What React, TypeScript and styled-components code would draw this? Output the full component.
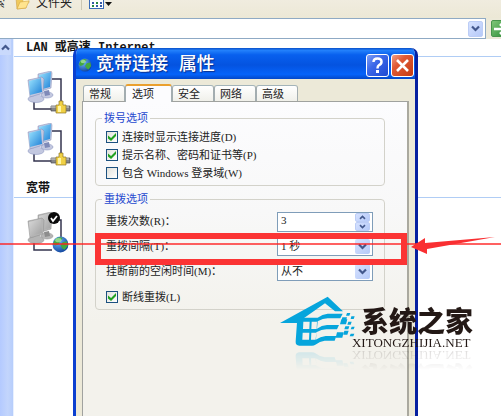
import React, { useState } from "react";
import styled, { createGlobalStyle } from "styled-components";

const uiFont = '"Liberation Serif", "Noto Sans CJK SC", serif';
const monoFont = '"Liberation Mono", "Noto Sans CJK SC", monospace';

const GlobalStyle = createGlobalStyle`
  * { box-sizing: border-box; }
  body { margin: 0; background: #fff; color: #222; font: 11px/13px ${uiFont}; }
  button, input, select { font: inherit; color: inherit; margin: 0; padding: 0; }
`;

const Desktop = styled.div`
  position: relative;
  display: flex;
  flex-direction: column;
  height: 100vh;
  overflow: hidden;
`;

const Toolbar = styled.div`
  display: flex;
  align-items: flex-end;
  flex: none;
  height: 18px;
  padding-bottom: 8px;
  overflow: hidden;
  background: linear-gradient(#f0ecdf, #ece8d6);
`;

const ToolButton = styled.button`
  display: flex;
  align-items: flex-end;
  gap: 4px;
  border: 0;
  background: none;
  white-space: nowrap;
  font-size: 12px;
  line-height: 14px;
`;

const ClippedTool = styled(ToolButton)`
  width: 15px;
  justify-content: flex-end;
  padding-right: 10px;
`;

const Separator = styled.span`
  width: 1px;
  height: 26px;
  margin: 0 7px 0 9px;
  align-self: flex-end;
  background: #cbc7b4;
`;

const AddressBar = styled.form`
  display: flex;
  flex: none;
  height: 21px;
  background: #ece9d8;
`;

const AddressField = styled.div`
  display: flex;
  align-items: center;
  flex: 1;
  min-width: 0;
  padding-right: 2px;
  border: solid #8faac4;
  border-width: 1px 1px 1px 0;
  background: #fff;
`;

const AddressInput = styled.input`
  flex: 1;
  min-width: 0;
  border: 0;
  outline: 0;
  background: none;
`;

const BlueButton = styled.button`
  display: grid;
  place-items: center;
  width: 15px;
  height: 16px;
  border: 1px solid #bccdf6;
  border-radius: 2px;
  background: linear-gradient(135deg, #d6e2ff, #b5c9f8);
`;

const GoButton = styled.button`
  display: grid;
  place-items: center;
  flex: none;
  width: 18px;
  height: 17px;
  margin: 2px -8px 0 5px;
  border: 1px solid #47944b;
  border-radius: 2px;
  background: linear-gradient(135deg, #7fc678, #2b8b34);
`;

const Explorer = styled.main`
  display: flex;
  flex: 1;
  min-height: 0;
`;

const SideStrip = styled.div`
  display: flex;
  flex-direction: column;
  width: 14px;
  border-right: 1px solid #e8f0ff;
  background: linear-gradient(90deg, #b4caff, #c3d5fc 60%, #b6cdfb);
`;

const SideButton = styled.button`
  display: grid;
  place-items: center;
  width: 11px;
  height: 16px;
  border: 0;
  background: #c9d9fc;
`;

const Connections = styled.div`
  flex: 1;
  min-width: 0;
`;

const GroupHeading = styled.h2`
  height: 18px;
  margin: 0;
  padding: 2px 0 0 12px;
  border-bottom: 1px solid #b0cdf5;
  font: bold 12px/15px ${monoFont};
  color: #161616;
`;

const IconList = styled.div<{ $short?: boolean }>`
  display: grid;
  justify-content: start;
  gap: 8px;
  padding: ${(p) => (p.$short ? "14px 0 0 13px" : "14px 0 13px 13px")};
  svg { display: block; }
`;

const Dialog = styled.section`
  position: absolute;
  inset: 48px 83px 0 73px;
  display: flex;
  flex-direction: column;
  border: solid #0b3fd0;
  border-width: 0 3px;
  border-right-color: #0620a0;
  border-radius: 7px 7px 0 0;
  background: #ece9d8;
  overflow: hidden;
`;

const TitleBar = styled.header`
  display: flex;
  align-items: center;
  gap: 2px;
  flex: none;
  height: 31px;
  margin: 0 -3px;
  padding: 3px 4px 0 5px;
  background: linear-gradient(#0a50c8, #2280fb 8%, #0860ee 22%, #0453e0 55%, #0563fa 85%, #0347c8);
`;

const Title = styled.h1`
  flex: 1;
  margin: 0 0 0 2px;
  font: 500 18px/22px ${monoFont};
  color: #fff;
  text-shadow: 1px 1px 1px #0b2f8d;
  white-space: nowrap;
`;

const CaptionButton = styled.button<{ $danger?: boolean }>`
  display: grid;
  place-items: center;
  width: 23px;
  height: 23px;
  border: 1px solid #fff;
  border-radius: 3px;
  background: ${(p) =>
    p.$danger
      ? "linear-gradient(135deg, #f0a088, #e05a35 35%, #c43a12)"
      : "linear-gradient(135deg, #7e9ff5, #3c68e8 40%, #1d49d2)"};
`;

const Tabs = styled.div`
  display: flex;
  align-items: flex-end;
  flex: none;
  height: 22px;
  padding: 0 7px;
`;

const Tab = styled.button<{ $active: boolean }>`
  width: ${(p) => (p.$active ? 47 : 42)}px;
  height: ${(p) => (p.$active ? 18 : 16)}px;
  margin-bottom: ${(p) => (p.$active ? -1 : 0)}px;
  padding-left: ${(p) => (p.$active ? 6 : 5)}px;
  border: 1px solid #a3adb0;
  border-top: ${(p) => (p.$active ? "2px solid #eaa02e" : "1px solid #a3b4b9")};
  border-bottom: 0;
  border-radius: 3px 3px 0 0;
  background: ${(p) => (p.$active ? "#fcfcfe" : "linear-gradient(#fff, #f0f0ea)")};
  position: relative;
  z-index: ${(p) => (p.$active ? 1 : 0)};
  text-align: left;
  line-height: 14px;
  white-space: nowrap;
`;

const Panel = styled.div`
  display: flex;
  flex-direction: column;
  gap: 7px;
  flex: 1;
  margin: 0 6px;
  padding: 10px 22px 0 12px;
  border: 1px solid #a0a29f;
  border-right: 2px solid #aaa99f;
  border-bottom: 0;
  background: linear-gradient(#fcfcfe, #f8f8f8 35%, #f3f2ec 70%);
`;

const Group = styled.fieldset`
  min-width: 0;
  margin: 0;
  padding: 3px 11px 3px 10px;
  border: 1px solid #d3d2ca;
  border-radius: 4px;
`;

const Legend = styled.legend`
  margin-left: -4px;
  padding: 0 2px;
  color: #2548cf;
`;

const CheckRow = styled.label<{ $spaced?: boolean }>`
  display: flex;
  align-items: center;
  gap: 4px;
  height: 18px;
  margin-top: ${(p) => (p.$spaced ? 4 : 0)}px;
  white-space: nowrap;
`;

const CheckBox = styled.input`
  appearance: none;
  display: grid;
  place-items: center;
  width: 12px;
  height: 12px;
  border: 1px solid #1c5180;
  background: linear-gradient(135deg, #e2e2dc, #fff);
  &:checked::before {
    content: "";
    width: 8px;
    height: 8px;
    background: #21a121;
    clip-path: polygon(0 30%, 38% 62%, 100% 0, 100% 38%, 38% 100%, 0 68%);
  }
`;

const FieldRow = styled.div`
  display: grid;
  grid-template-columns: 1fr 96px;
  align-items: center;
  height: 25px;
  white-space: nowrap;
`;

const FieldBox = styled.div<{ $tall?: boolean }>`
  display: grid;
  grid-template-columns: 1fr 16px;
  align-items: center;
  height: ${(p) => (p.$tall ? 20 : 18)}px;
  padding-right: 1px;
  border: 1px solid #7f9db9;
  background: #fff;
`;

const NumberInput = styled.input`
  width: 100%;
  padding: 0 3px 3px;
  border: 0;
  outline: 0;
  background: none;
`;

const Spinner = styled.span`
  display: grid;
`;

const SpinButton = styled(BlueButton)`
  height: 9px;
`;

const Choice = styled.select`
  grid-area: 1 / 1 / 2 / 3;
  width: 100%;
  height: 16px;
  padding: 0 3px;
  border: 0;
  outline: 0;
  appearance: none;
  background: none;
`;

const ChoiceArrow = styled.span`
  grid-area: 1 / 2;
  display: grid;
  place-items: center;
  width: 15px;
  height: 15px;
  border-radius: 2px;
  background: linear-gradient(135deg, #d6e2ff, #b5c9f8);
  pointer-events: none;
`;

const Guide = styled.div`
  position: absolute;
  inset: 243px 0 auto 0;
  height: 2px;
  background: rgba(255, 30, 30, 0.7);
`;

const Callout = styled.div`
  position: absolute;
  inset: 233px 94px auto 95px;
  height: 32px;
  border: 6px solid #fb3434;
`;

const Pointer = styled.svg`
  position: absolute;
  top: 236px;
  right: 5px;
`;

const Watermark = styled.div`
  position: absolute;
  right: 28px;
  top: 296px;
  display: flex;
  -webkit-box-reflect: below 0 linear-gradient(transparent 60%, rgba(0, 0, 0, 0.16));
`;

const MarkText = styled.div`
  margin: 9px 0 0 -4px;
  color: #231815;
  white-space: nowrap;
`;

const MarkName = styled.div`
  padding-left: 9px;
  font: 900 28px/31px "Noto Sans CJK SC", sans-serif;
`;

const MarkSite = styled.div`
  font: 13px/13px "Liberation Serif", serif;
`;

function Chevron({ up = false, small = false }: { up?: boolean; small?: boolean }) {
  return (
    <svg width={small ? 7 : 9} height={small ? 5 : 7} viewBox="0 0 9 7" aria-hidden="true">
      <path d={up ? "M1 5.5 4.5 2 8 5.5" : "M1 1.5 4.5 5 8 1.5"} fill="none" stroke="#43588c" strokeWidth="2.2" />
    </svg>
  );
}

function FolderIcon() {
  return (
    <svg width="17" height="16" viewBox="0 0 17 16" aria-hidden="true">
      <path d="M1 4 5 3l2 2 4-1v10L2 15Z" fill="#f0c95c" stroke="#cfa044" strokeWidth=".6" />
      <path d="M8 1h6v8H8Z" fill="#fdf3c8" stroke="#d2b566" strokeWidth=".5" />
      <path d="m5 8 9-1-3 7-9 1Z" fill="#ffe48e" stroke="#d5a63f" strokeWidth=".6" />
    </svg>
  );
}

function ViewsIcon() {
  return (
    <svg width="23" height="18" viewBox="0 0 23 18" aria-hidden="true">
      <rect x=".5" y=".5" width="14" height="16" fill="#fff" stroke="#3b6cb8" />
      <rect x="1" y="1" width="13" height="3" fill="#2b62c9" />
      <path d="M3 6h2v2H3zM11 6h2v2h-2zM7 10h2v2H7zM3 13h2v2H3z" fill="#268b42" />
      <path d="M7 6h2v2H7zM3 10h2v2H3zM11 10h2v2h-2zM7 13h2v2H7zM11 13h2v2h-2z" fill="#355ba7" />
      <path d="M16 10h7l-3.500 4Z" fill="#111" />
    </svg>
  );
}

function Globe() {
  return (
    <>
      <circle cx="8" cy="8" r="7.500" fill="url(#sea)" />
      <path d="M3 3q4-3 7-1L8 5 6 8 3 9 1 7ZM10 6l4-1 1 4-3 4-2-1-2-3Z" fill="#43a83f" />
      <ellipse cx="6" cy="4" rx="3" ry="2" fill="#c7f4c0" opacity=".6" />
    </>
  );
}

function ConnectionIcon({ dialUp = false }: { dialUp?: boolean }) {
  const id = dialUp ? "gray-screen" : "blue-screen";
  const shell = dialUp ? "#b5b5b5" : "#c3c8e0";
  const edge = dialUp ? "#8d8d8d" : "#7f8ab8";
  return (
    <svg width="44" height="44" viewBox="0 0 44 44" role="img" aria-label={dialUp ? "宽带连接" : "本地连接"}>
      <defs>
        <linearGradient id={id} x1="0" y1="0" x2="1" y2="1">
          <stop offset="0" stopColor={dialUp ? "#d9d9d9" : "#9be4ff"} />
          <stop offset="1" stopColor={dialUp ? "#a0a0a0" : "#1e7fd6"} />
        </linearGradient>
        <radialGradient id="sea" cx=".35" cy=".3" r=".8">
          <stop offset="0" stopColor="#6fb9ff" />
          <stop offset="1" stopColor="#093b96" />
        </radialGradient>
      </defs>
      <path d="M25 8h9v26M7 29v9h18" fill="none" stroke="#34344f" strokeWidth="1.500" />
      <ellipse cx="20" cy="24" rx="6" ry="3" fill={shell} stroke={edge} strokeWidth=".5" />
      <path d="m17 20 5-1 1 5-5 1Z" fill={edge} />
      <path d="m11 3 13-3 1 2-1 15-13 4Z" fill={shell} stroke={edge} strokeWidth=".5" />
      <path d="m12 4 12-3-1 15-11 3Z" fill={`url(#${id})`} />
      <ellipse cx="9" cy="28" rx="8" ry="3.500" fill={shell} stroke={edge} strokeWidth=".5" />
      <path d="m6 22 7-1 1 7-6 2Z" fill={shell} />
      <path d="m1 9 14-3 2 2-1 14-13 4Z" fill={shell} stroke={edge} strokeWidth=".5" />
      <path d="m2 10 12-3 1 14-12 3Z" fill={`url(#${id})`} />
      {dialUp ? (
        <>
          <circle cx="27" cy="6" r="6" fill="#0b0b0b" />
          <path d="m24 6 2 3 4-5" fill="none" stroke="#fff" strokeWidth="1.800" />
          <g transform="translate(25 24) scale(1.060)">
            <Globe />
          </g>
        </>
      ) : (
        <>
          <path d="M24 35h19v5H24Z" fill="#85868a" stroke="#4b4b52" strokeWidth=".7" />
          <path d="M24 36h18" stroke="#d9dadb" />
          <path d="M32 30h4v4h3v8H29v-8h3Z" fill="#f1d145" stroke="#8c7526" strokeWidth=".7" />
          <path d="M31 35h3v6h-3z" fill="#fff5a6" />
        </>
      )}
    </svg>
  );
}

function HouseLogo() {
  return (
    <svg width="76" height="50" viewBox="14 17 228 150" aria-hidden="true">
      <g fill="#06a5dc">
        <path d="M14 98 157 19l46 44h-24l-30-24-84 59Z" />
        <path
          fillRule="evenodd"
          d="M66 82h61q14-11 30-12h45l-7 14h-38q-14 0-30 9l-2 22q14-10 30-11h36l-6 13h-32q-14 0-30 9l-2 22q14-9 30-11h32l-5 14h-30q-14 2-28 12-4 3-10 3H72q-12 0-11-13ZM84 94l-1 22h19l1-22ZM109 94l-1 22h16l1-22ZM82 127l-1 21h20l1-21ZM108 127l-1 21h15l1-21Z"
        />
        <path d="M215 68h10l-3 8h-10ZM201 81h14l-3 10h-14ZM228 78h10l-3 8h-9ZM198 87h18l-4 15h-18ZM219 94h10l-3 9h-10ZM229 109h9l-3 8h-9ZM210 108h12l-3 9h-12ZM185 126h20l-4 16h-20ZM207 121h13l-4 12h-12ZM226 130h11l-3 8h-11Z" />
      </g>
    </svg>
  );
}

const tabNames = ["常规", "选项", "安全", "网络", "高级"];
const dialOptions = [
  { text: "连接时显示连接进度(D)", on: true },
  { text: "提示名称、密码和证书等(P)", on: true },
  { text: "包含 Windows 登录域(W)", on: false },
];

export default function App() {
  const [tab, setTab] = useState("选项");
  const [count, setCount] = useState(3);
  return (
    <Desktop>
      <GlobalStyle />
      <Toolbar>
        <ClippedTool>搜索</ClippedTool>
        <ToolButton>
          <FolderIcon />
          文件夹
        </ToolButton>
        <Separator />
        <ToolButton aria-label="查看">
          <ViewsIcon />
        </ToolButton>
      </Toolbar>
      <AddressBar onSubmit={(e) => e.preventDefault()}>
        <AddressField>
          <AddressInput aria-label="地址" />
          <BlueButton type="button" aria-label="展开地址">
            <Chevron />
          </BlueButton>
        </AddressField>
        <GoButton aria-label="转到">
          <svg width="14" height="12" viewBox="0 0 14 12" aria-hidden="true">
            <path d="M1 6h10M7 1l5 5-5 5" fill="none" stroke="#fff" strokeWidth="2.500" />
          </svg>
        </GoButton>
      </AddressBar>
      <Explorer>
        <SideStrip>
          <SideButton aria-label="向上滚动">
            <Chevron up />
          </SideButton>
        </SideStrip>
        <Connections>
          <GroupHeading>LAN 或高速 Internet</GroupHeading>
          <IconList>
            <ConnectionIcon />
            <ConnectionIcon />
          </IconList>
          <GroupHeading>宽带</GroupHeading>
          <IconList $short>
            <ConnectionIcon dialUp />
          </IconList>
        </Connections>
      </Explorer>

      <Dialog role="dialog" aria-labelledby="dialog-title">
        <TitleBar>
          <svg width="14" height="14" viewBox="0 0 16 16" aria-hidden="true">
            <Globe />
          </svg>
          <Title id="dialog-title">宽带连接 属性</Title>
          <CaptionButton aria-label="帮助">
            <svg width="15" height="17" viewBox="0 0 15 17" aria-hidden="true">
              <path d="M3.500 5q0-3.500 4-3.500t4 3.300Q11.500 7 9 8.200 7.500 9 7.500 11.500" fill="none" stroke="#fff" strokeWidth="2.500" />
              <rect x="6" y="13" width="3" height="3" fill="#fff" />
            </svg>
          </CaptionButton>
          <CaptionButton $danger aria-label="关闭">
            <svg width="15" height="15" viewBox="0 0 15 15" aria-hidden="true">
              <path d="m2 2 11 11M13 2 2 13" stroke="#fff" strokeWidth="2.600" />
            </svg>
          </CaptionButton>
        </TitleBar>
        <Tabs role="tablist">
          {tabNames.map((name) => (
            <Tab key={name} role="tab" aria-selected={tab === name} $active={tab === name} onClick={() => setTab(name)}>
              {name}
            </Tab>
          ))}
        </Tabs>
        <Panel role="tabpanel">
          <Group>
            <Legend>拨号选项</Legend>
            {dialOptions.map((option) => (
              <CheckRow key={option.text}>
                <CheckBox type="checkbox" defaultChecked={option.on} />
                {option.text}
              </CheckRow>
            ))}
          </Group>
          <Group>
            <Legend>重拨选项</Legend>
            <FieldRow>
              <label htmlFor="count">重拨次数(R)：</label>
              <FieldBox $tall>
                <NumberInput id="count" value={count} onChange={(e) => setCount(Number(e.target.value) || 0)} />
                <Spinner>
                  <SpinButton aria-label="增加" onClick={() => setCount(count + 1)}>
                    <Chevron up small />
                  </SpinButton>
                  <SpinButton aria-label="减少" onClick={() => setCount(Math.max(0, count - 1))}>
                    <Chevron small />
                  </SpinButton>
                </Spinner>
              </FieldBox>
            </FieldRow>
            <FieldRow>
              <label htmlFor="interval">重拨间隔(T)：</label>
              <FieldBox>
                <Choice id="interval">
                  <option>1 秒</option>
                </Choice>
                <ChoiceArrow>
                  <Chevron />
                </ChoiceArrow>
              </FieldBox>
            </FieldRow>
            <FieldRow>
              <label htmlFor="idle">挂断前的空闲时间(M)：</label>
              <FieldBox>
                <Choice id="idle">
                  <option>从不</option>
                </Choice>
                <ChoiceArrow>
                  <Chevron />
                </ChoiceArrow>
              </FieldBox>
            </FieldRow>
            <CheckRow $spaced>
              <CheckBox type="checkbox" defaultChecked />
              断线重拨(L)
            </CheckRow>
          </Group>
        </Panel>
      </Dialog>

      <Guide />
      <Callout />
      <Pointer width="86" height="18" viewBox="0 0 86 18" aria-hidden="true">
        <path d="M1 11 15 2v5L85 1 17 13v5Z" fill="#f92f32" />
      </Pointer>
      <Watermark>
        <HouseLogo />
        <MarkText>
          <MarkName>系统之家</MarkName>
          <MarkSite>XITONGZHIJIA.NET</MarkSite>
        </MarkText>
      </Watermark>
    </Desktop>
  );
}
